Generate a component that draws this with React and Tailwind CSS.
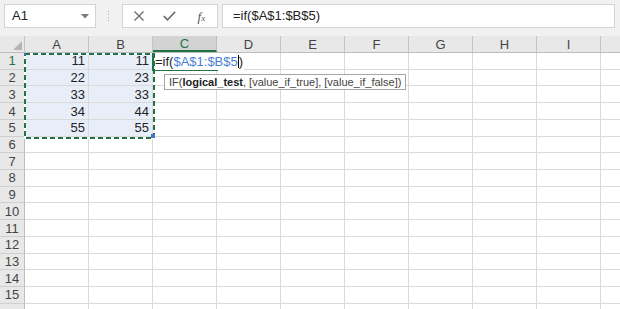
import React from "react";

const COLS = ["A", "B", "C", "D", "E", "F", "G", "H", "I", ""];
const DATA = {
  1: ["11", "11"],
  2: ["22", "23"],
  3: ["33", "33"],
  4: ["34", "44"],
  5: ["55", "55"],
};

function Toolbar() {
  return (
    <div className="h-[36px] bg-[#f1f1f1] flex items-start pt-[4px]">
      <div className="ml-[4px] w-[92px] h-[24px] bg-white border border-[#d4d4d4] flex items-center justify-between pl-[7px] pr-[6px] text-[13px] text-[#222]">
        <span>A1</span>
        <svg width="8" height="5" viewBox="0 0 8 5">
          <path d="M0 0 L8 0 L4 4.5 Z" fill="#7a7a7a" />
        </svg>
      </div>
      <div className="ml-[11px] w-[2px] h-[24px] flex flex-col items-center justify-center gap-[2px]">
        <div className="w-[1px] h-[1px] bg-[#a8a8a8]" />
        <div className="w-[1px] h-[1px] bg-[#a8a8a8]" />
        <div className="w-[1px] h-[1px] bg-[#a8a8a8]" />
        <div className="w-[1px] h-[1px] bg-[#a8a8a8]" />
      </div>
      <div className="ml-[13px] w-[96px] h-[24px] bg-white border border-[#d4d4d4] flex items-center">
        <div className="w-[32px] flex justify-center">
          <svg width="10" height="10" viewBox="0 0 10 10">
            <path d="M0.5 0.5 L9.5 9.5 M9.5 0.5 L0.5 9.5" stroke="#6a6a6a" strokeWidth="1.3" />
          </svg>
        </div>
        <div className="w-[32px] flex justify-center">
          <svg width="13" height="10" viewBox="0 0 13 10">
            <path d="M0.8 5 L4.5 8.8 L12.2 0.8" stroke="#6a6a6a" strokeWidth="1.6" fill="none" />
          </svg>
        </div>
        <div className="w-[32px] flex justify-center">
          <span className="font-['Liberation_Serif',serif] italic text-[13px] text-[#555] leading-none">
            f<span className="text-[9px]">x</span>
          </span>
        </div>
      </div>
      <div className="ml-[4px] w-[393px] h-[24px] bg-white border border-[#d4d4d4] flex items-center pl-[10px] text-[13px] text-[#222]">
        =if($A$1:$B$5)
      </div>
    </div>
  );
}

function HeaderRow() {
  return (
    <div className="h-[17px] flex bg-[#e8e8e8] border-b border-[#bdbdbd]">
      <div className="w-[25px] shrink-0 border-r border-[#c4c4c4] relative">
        <svg className="absolute right-[2px] bottom-[2px]" width="9" height="9" viewBox="0 0 9 9">
          <path d="M9 0 L9 9 L0 9 Z" fill="#b4b4b4" />
        </svg>
      </div>
      {COLS.map((c, i) => (
        <div
          key={i}
          className={
            c === "C"
              ? "w-[64px] shrink-0 border-r border-[#bdbdbd] bg-[#d3d3d3] text-[#217346] border-b-2 border-b-[#217346] flex items-center justify-center text-[13px] leading-none"
              : "w-[64px] shrink-0 border-r border-[#c4c4c4] text-[#444] flex items-center justify-center text-[13px] leading-none"
          }
        >
          {c}
        </div>
      ))}
    </div>
  );
}

function Row({ n }) {
  const d = DATA[n];
  return (
    <div className="h-[16.73px] flex shrink-0">
      <div
        className={
          "w-[25px] shrink-0 bg-[#e8e8e8] border-r border-[#bdbdbd] border-b border-b-[#cfcfcf] flex items-center justify-center text-[13px] leading-none " +
          (n === 1 ? "text-[#217346] bg-[#dcdcdc]" : "text-[#444]")
        }
      >
        {n <= 15 ? n : ""}
      </div>
      {COLS.map((c, i) => {
        const sel = d && i < 2;
        return (
          <div
            key={i}
            className={
              "w-[64px] shrink-0 border-r border-b border-[#dadada] flex items-center justify-end pr-[3px] text-[13px] leading-none text-[#222] " +
              (sel ? "bg-[#e8eef8]" : "bg-white")
            }
          >
            {sel ? d[i] : ""}
          </div>
        );
      })}
    </div>
  );
}

export default function App() {
  const rows = [];
  for (let i = 1; i <= 16; i++) rows.push(<Row key={i} n={i} />);
  return (
    <div className="w-[620px] h-[309px] overflow-hidden bg-white relative font-['Liberation_Sans',Arial,sans-serif]">
      <Toolbar />
      <div className="h-[309px] flex flex-col">
        <HeaderRow />
        {rows}
      </div>

      {/* marching ants around A1:B5 */}
      <svg className="absolute left-[24px] top-[53px]" width="131" height="86" viewBox="0 0 131 86">
        <rect x="1" y="1" width="129" height="84" fill="none" stroke="#ffffff" strokeWidth="2" />
        <rect x="1" y="1" width="129" height="84" fill="none" stroke="#217346" strokeWidth="2" strokeDasharray="5 3" />
      </svg>
      <div className="absolute left-[24px] top-[53px] w-[2px] h-[2px] bg-[#4472c4]" />
      <div className="absolute left-[151px] top-[134px] w-[4px] h-[4px] bg-[#4472c4]" />

      {/* active cell C1 in edit mode */}
      <div className="absolute left-[152px] top-[53px] w-[66px] h-[18px] border-l-2 border-b-2 border-[#217346]" />
      <div className="absolute left-[155px] top-[53px] h-[17px] flex items-center text-[13px] leading-none text-[#222] bg-white pr-[1px]">
        <span>=if(</span>
        <span className="text-[#4a7fd6]">$A$1:$B$5</span>
        <span className="w-[1px] h-[13px] bg-black" />
        <span>)</span>
      </div>

      {/* function tooltip */}
      <div className="absolute left-[164px] top-[74px] w-[242px] h-[16px] bg-white border border-[#a6a6a6] flex items-center pl-[4px] text-[11px] leading-none text-[#444] whitespace-nowrap">
        IF(<span className="font-bold text-[#222]">logical_test</span>, [value_if_true], [value_if_false])
      </div>
    </div>
  );
}
